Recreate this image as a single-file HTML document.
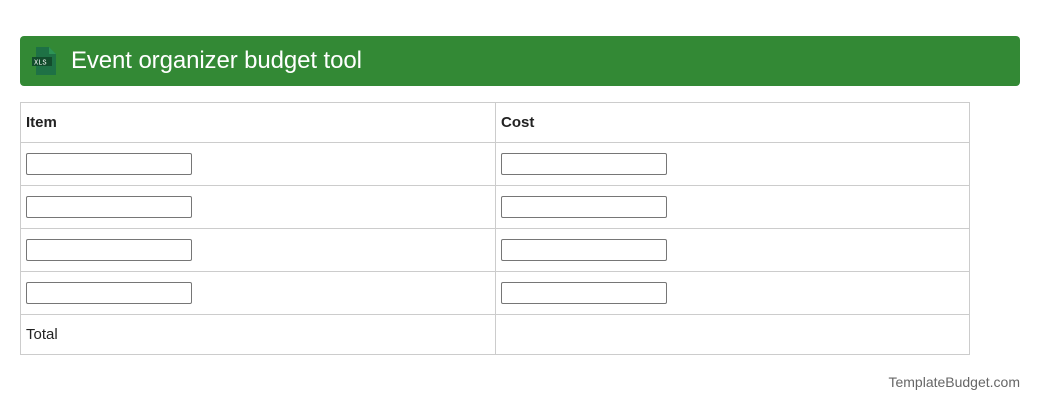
<!DOCTYPE html>
<html><head><meta charset="utf-8"><style>
body{margin:0;width:1040px;height:412px;background:#fff;font-family:"Liberation Sans",Roboto,sans-serif;position:relative;overflow:hidden}
.hdr{position:absolute;left:20px;top:36px;width:1000px;height:50px;background:#338935;border-radius:4px;color:#fff;font-size:24px}
.hdr span{position:absolute;left:51px;top:10px;line-height:30px;letter-spacing:-0.1px}
.ic{position:absolute;left:11px;top:10px}
table{position:absolute;left:20px;top:102px;width:950px;border-collapse:collapse;font-size:15px;color:#222}
td{border:1px solid #ccc;padding:0 5px;vertical-align:middle}
tr.h td{height:39px;font-weight:bold}
tr.r td{height:42px}
tr.t td{height:39px}
.in{width:164px;height:20px;border:1px solid #767676;border-radius:2px}
.ft{position:absolute;right:20px;top:374px;font-size:14px;color:#666}
</style></head><body>
<div class="hdr"><svg class="ic" width="28" height="30" viewBox="0 0 28 30"><path d="M5 1h13l7 7v21H5z" fill="#1e7145"/><path d="M18 1v7h7" fill="#2d9355"/><rect x="1" y="11" width="20" height="9" fill="#124c2c"/><text x="3" y="18.5" font-size="7" fill="#fff" font-family="Liberation Mono,monospace">XLS</text></svg><span>Event organizer budget tool</span></div>
<table>
<tr class="h"><td style="width:464px">Item</td><td>Cost</td></tr>
<tr class="r"><td><div class="in"></div></td><td><div class="in"></div></td></tr>
<tr class="r"><td><div class="in"></div></td><td><div class="in"></div></td></tr>
<tr class="r"><td><div class="in"></div></td><td><div class="in"></div></td></tr>
<tr class="r"><td><div class="in"></div></td><td><div class="in"></div></td></tr>
<tr class="t"><td>Total</td><td></td></tr>
</table>
<div class="ft">TemplateBudget.com</div>
</body></html>
